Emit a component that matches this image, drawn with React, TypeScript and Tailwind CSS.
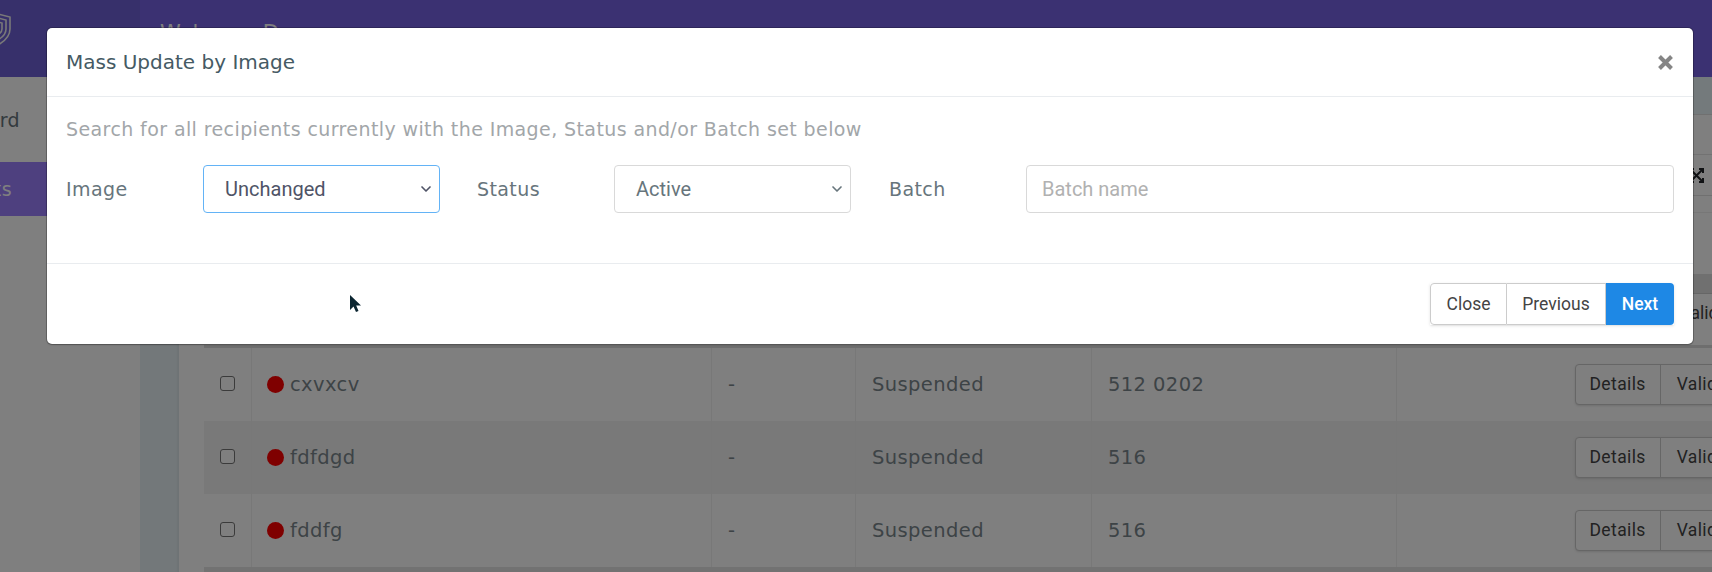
import { ChevronDown } from "lucide-react";

const poppins = { fontFamily: '"DejaVu Sans", sans-serif' };
const roboto = { fontFamily: "Roboto, sans-serif" };

const rows = [
  { name: "cxvxcv", code: "512 0202", bg: "bg-white" },
  { name: "fdfdgd", code: "516", bg: "bg-[#f2f2f2]" },
  { name: "fddfg", code: "516", bg: "bg-white" },
];

function ActionButtons() {
  return (
    <div
      className="ml-auto mr-[-48px] flex h-[41px] shrink-0 rounded-[4px] border border-[#ccc] bg-white text-[17.5px] text-[#444] shadow-sm"
      style={roboto}
    >
      <span className="flex w-[85px] items-center justify-center border-r border-[#ccc]">Details</span>
      <span className="flex items-center px-4">Validate</span>
    </div>
  );
}

function Row({ name, code, bg }: { name: string; code: string; bg: string }) {
  return (
    <div className={`flex h-[73px] text-[19.5px] tracking-[0.4px] text-[#7b878d] ${bg}`}>
      <div className="flex w-[48px] justify-center border-r border-[#f0f0f0] pt-[28px]">
        <span className="h-[15px] w-[15px] rounded-[3px] border border-[#767676] bg-white" />
      </div>
      <div className="flex w-[460px] items-center gap-[6px] border-r border-[#f0f0f0] pl-[15px]">
        <span className="h-[17px] w-[17px] rounded-full bg-[#ff0000]" />
        {name}
      </div>
      <div className="flex w-[144px] items-center border-r border-[#f0f0f0] pl-4">-</div>
      <div className="flex w-[236px] items-center border-r border-[#f0f0f0] pl-4">Suspended</div>
      <div className="flex w-[305px] items-center border-r border-[#f0f0f0] pl-4">{code}</div>
      <div className="flex flex-1 items-center overflow-hidden">
        <ActionButtons />
      </div>
    </div>
  );
}

function Background() {
  return (
    <div className="flex h-[572px] w-[1712px] flex-col overflow-hidden bg-white" style={poppins}>
      <div className="flex h-[77px] shrink-0 bg-[#7662e4]">
        <div className="flex w-[140px] items-center bg-[#6e60d6]">
          <svg className="mb-[18px] ml-[-16px] h-[34px] w-[27px]" viewBox="0 0 27 34" fill="none" stroke="#f2f2f2" strokeWidth="1.6">
            <path d="M1 4 L14 1 L26 4 V16 C26 24 20 29 12 33" />
            <path d="M6 7 L14 5 L22 7 V16 C22 21 18 25 12 28" />
            <path d="M10 10 L14 9 L18 10 V16 C18 19 16 21 12 23" />
          </svg>
        </div>
        <div className="pl-[20px] pt-[18px] text-[21px] text-white">Welcome Da</div>
      </div>
      <div className="flex min-h-0 flex-1">
        <div className="w-[140px] shrink-0 pt-[29px] text-[19px] tracking-[0.4px] text-[#67757c]">
          <div className="flex h-[56px] items-start justify-end pr-[120px]">
            <span className="whitespace-nowrap">Dashboard</span>
          </div>
          <div className="flex h-[54px] items-center justify-end whitespace-nowrap bg-[#9c80ff] pr-[128px] text-white">
            Recipients
          </div>
        </div>
        <div className="flex min-w-0 flex-1">
          <div className="w-[39px] shrink-0 bg-[#e6f0f4] shadow-[inset_-2px_0_2px_rgba(0,0,0,0.04)]" />
          <div className="flex min-w-0 flex-1 flex-col">
            <div className="h-[38px] shrink-0 border-b border-[#e0e0e0] bg-[#e8f4f8]" />
            <div className="flex min-h-0 flex-1 flex-col pl-[25px]">
              <div className="h-[40px] shrink-0 border-b border-[#e4e4e4]" />
              <div className="flex h-[41px] shrink-0 items-center justify-end border-b border-[#e0e0e0] pr-[8px]">
                <svg className="h-[15px] w-[15px]" viewBox="0 0 15 15" fill="none" stroke="#212529" strokeWidth="2">
                  <path d="M2 2 L13 13 M13 2 L2 13" />
                  <path d="M1 5 V1 H5 M10 1 H14 V5 M14 10 V14 H10 M5 14 H1 V10" />
                </svg>
              </div>
              <div className="h-[17px] shrink-0 border-b border-[#eeeeee]" />
              <div className="h-[61px] shrink-0" />
              <div className="h-[19px] shrink-0 bg-[#e0e0e0]" />
              <div className="flex h-[40px] shrink-0 overflow-hidden">
                <ActionButtons />
              </div>
              <div className="h-[12px] shrink-0" />
              <div className="h-[3px] shrink-0 bg-[#dcdcdc]" />
              {rows.map((r) => (
                <Row key={r.name} {...r} />
              ))}
              <div className="flex-1 bg-[#e4e4e4]" />
            </div>
          </div>
        </div>
      </div>
    </div>
  );
}

function Field({ label, value, focus }: { label: string; value: string; focus?: boolean }) {
  return (
    <>
      <label className="w-[137px] shrink-0 text-[19px] tracking-[0.4px] text-[#67757c]">{label}</label>
      <div
        className={`flex h-[48px] w-[237px] shrink-0 items-center justify-between rounded-[4px] border bg-white pl-[21px] pr-[5px] text-[20px] ${
          focus ? "border-[#63b3f6] text-[#4f5467]" : "border-[#d9d9d9] text-[#67757c]"
        }`}
        style={roboto}
      >
        {value}
        <ChevronDown size={16} strokeWidth={2.5} />
      </div>
    </>
  );
}

export default function App() {
  return (
    <div className="relative h-[572px] w-[1712px] overflow-hidden">
      <Background />
      <div className="absolute inset-0 bg-black/50" />
      <div
        className="absolute left-[47px] top-[28px] w-[1646px] rounded-[5px] bg-white shadow-[0_0_0_1px_rgba(0,0,0,0.2),0_1px_2px_rgba(0,0,0,0.2)]"
        style={poppins}
      >
        <div className="flex h-[69px] items-center justify-between border-b border-[#e9ecef] pl-[19px] pr-[20px]">
          <h5 className="text-[20px] text-[#455a64]">Mass Update by Image</h5>
          <svg className="h-[15px] w-[15px]" viewBox="0 0 15 15" stroke="#858585" strokeWidth="4">
            <path d="M1.5 1.5 L13.5 13.5 M13.5 1.5 L1.5 13.5" />
          </svg>
        </div>
        <div className="h-[167px] border-b border-[#e9ecef] px-[19px] pt-[19px]">
          <p className="text-[19px] leading-[27px] tracking-[0.4px] text-[#a2a6a9]">
            Search for all recipients currently with the Image, Status and/or Batch set below
          </p>
          <div className="mt-[22px] flex items-center">
            <Field label="Image" value="Unchanged" focus />
            <div className="w-[37px] shrink-0" />
            <Field label="Status" value="Active" />
            <div className="w-[38px] shrink-0" />
            <label className="w-[137px] shrink-0 text-[19px] tracking-[0.4px] text-[#67757c]">Batch</label>
            <input
              className="h-[48px] min-w-0 flex-1 rounded-[4px] border border-[#d9d9d9] px-[15px] text-[20px] outline-none placeholder:text-[#b1b1b1]"
              style={roboto}
              placeholder="Batch name"
            />
          </div>
        </div>
        <div className="relative flex h-[80px] items-center justify-end pr-[19px]">
          <svg className="absolute left-[302px] top-[30px] h-[20px] w-[14px]" viewBox="0 0 14 20">
            <path d="M1 1 V16 L4.5 12.5 L7 18 L9.5 17 L7.2 11.5 H12 Z" fill="#0b2530" />
          </svg>
          <div className="flex h-[42px] text-[17.5px] shadow-sm" style={roboto}>
            <button className="w-[77px] rounded-l-[4px] border border-[#ccc] bg-white text-[#444]">Close</button>
            <button className="w-[99px] border-y border-r border-[#ccc] bg-white text-[#444]">Previous</button>
            <button className="w-[68px] rounded-r-[4px] bg-[#1e88e5] font-medium text-white">Next</button>
          </div>
        </div>
      </div>
    </div>
  );
}
